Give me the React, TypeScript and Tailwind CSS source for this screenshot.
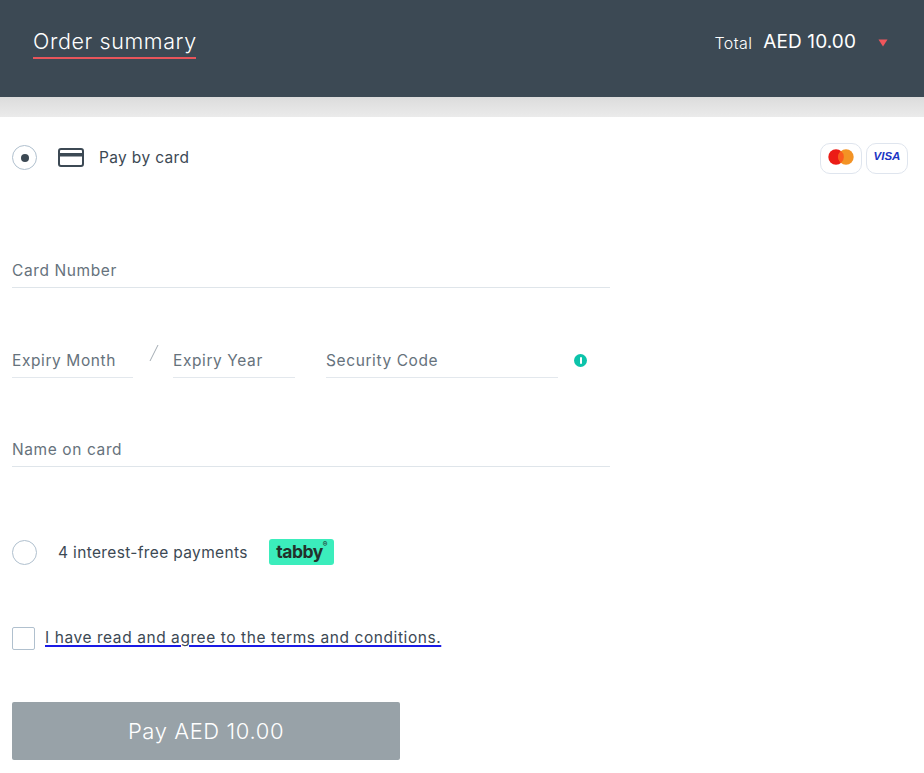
export default function App() {
  const label = "text-[15.5px] tracking-[0.6px] text-[#66727c] leading-[24px] whitespace-nowrap";
  return (
    <div className="w-[924px] h-[773px] overflow-hidden bg-white font-['Inter',sans-serif] text-[#3c4954]">
      <header className="h-[97px] bg-[#3c4954] flex items-center justify-between pl-[33px] pr-[36px] pb-[12px] text-white">
        <div className="border-b-2 border-[#e8555b] h-[32px] text-[21.5px] font-light leading-[28px] tracking-[0.6px] w-[163px] whitespace-nowrap">Order summary</div>
        <div className="flex items-center">
          <span className="text-[16px] font-light mr-[11px] tracking-[0.4px]">Total</span>
          <span className="text-[19px] font-normal tracking-[0.1px] mr-[22px]">AED 10.00</span>
          <svg width="10" height="8" viewBox="0 0 10 8"><path d="M0.5 0.5h9L5 7.5z" fill="#f0565c" /></svg>
        </div>
      </header>
      <div className="h-[20px] bg-gradient-to-b from-[#dcdcdc] to-[#ebebeb]" />

      <div className="h-[82px] pl-[12px] pr-[16px] flex items-start justify-between">
        <div className="flex items-center h-[25px] mt-[28px]">
          <span className="w-[25px] h-[25px] rounded-full border border-[#b0c0ce] flex items-center justify-center">
            <span className="w-[8px] h-[8px] rounded-full bg-[#3c4954]" />
          </span>
          <svg className="ml-[21px]" width="26" height="19" viewBox="0 0 26 19" fill="none">
            <rect x="1" y="1" width="24" height="17" rx="2" stroke="#3c4954" strokeWidth="2" />
            <rect x="1" y="5" width="24" height="3.5" fill="#3c4954" />
          </svg>
          <span className="ml-[15px] pt-[1px] text-[15.5px] tracking-[0.35px] leading-[28px]">Pay by card</span>
        </div>
        <div className="flex gap-[4px] mt-[26px]">
          <div className="w-[42px] h-[31px] rounded-[10px] border border-[#dfe5ee] flex items-center justify-center">
            <svg className="mb-[3px]" width="26" height="16" viewBox="0 0 26 16">
              <circle cx="8" cy="8" r="7.7" fill="#eb1c16" />
              <circle cx="18" cy="8" r="7.7" fill="#f39325" />
              <path d="M13 2a7.7 7.7 0 0 1 0 12a7.7 7.7 0 0 1 0-12z" fill="#fb5a1e" />
            </svg>
          </div>
          <div className="w-[42px] h-[31px] rounded-[10px] border border-[#dfe5ee] flex items-center justify-center">
            <span className="text-[11.5px] font-bold italic text-[#1a35c4] leading-none mb-[4px] font-['Liberation_Sans',sans-serif]">VISA</span>
          </div>
        </div>
      </div>

      <div className="pl-[12px] w-[610px]">
        <div className={`mt-[60px] h-[29px] border-b border-[#dfe5ea] ${label}`}>Card Number</div>

        <div className="mt-[61px] flex items-start">
          <div className={`w-[121px] h-[29px] border-b border-[#e3e8ed] ${label}`}>Expiry Month</div>
          <svg className="ml-[16px] mt-[-5px]" width="10" height="18" viewBox="0 0 10 18"><path d="M9 1L1 17" stroke="#a3acb3" strokeWidth="1" /></svg>
          <div className={`ml-[14px] w-[122px] h-[29px] border-b border-[#e3e8ed] ${label}`}>Expiry Year</div>
          <div className={`ml-[31px] w-[232px] h-[29px] border-b border-[#e3e8ed] ${label}`}>Security Code</div>
          <span className="ml-[16px] mt-[5px] w-[13px] h-[13px] rounded-full bg-[#0cc3aa] flex items-center justify-center">
            <span className="w-[2px] h-[7px] bg-white rounded-full" />
          </span>
        </div>

        <div className={`mt-[60px] h-[29px] border-b border-[#dfe5ea] ${label}`}>Name on card</div>
      </div>

      <div className="mt-[72px] pl-[12px] flex items-center h-[26px]">
        <span className="w-[25px] h-[25px] rounded-full border border-[#b0c0ce]" />
        <span className="ml-[21px] pt-[1px] text-[15.5px] tracking-[0.35px] leading-[28px]">4 interest-free payments</span>
        <span className="ml-[21px] w-[65px] h-[26px] rounded-[3px] bg-[#3bedbc] flex items-start justify-center pl-[1px]">
          <span className="text-[17.5px] font-bold text-[#23302b] leading-[25px] tracking-[-0.5px]">tabby</span>
          <span className="text-[7px] font-bold text-[#23302b] leading-[12px]">®</span>
        </span>
      </div>

      <div className="mt-[61px] pl-[12px] flex items-center h-[24px]">
        <span className="w-[23px] h-[23px] rounded-[2px] border border-[#b0c0ce]" />
        <a className="ml-[10px] text-[15.5px] tracking-[0.57px] text-[#3c4954] underline decoration-[#1a1ae6] decoration-[1.5px] underline-offset-[1.5px]">I have read and agree to the terms and conditions.</a>
      </div>

      <button className="mt-[52px] ml-[12px] w-[388px] h-[58px] rounded-[2px] bg-[#98a2a8] text-white text-[22px] font-light tracking-[0.6px]">Pay AED 10.00</button>
    </div>
  );
}
